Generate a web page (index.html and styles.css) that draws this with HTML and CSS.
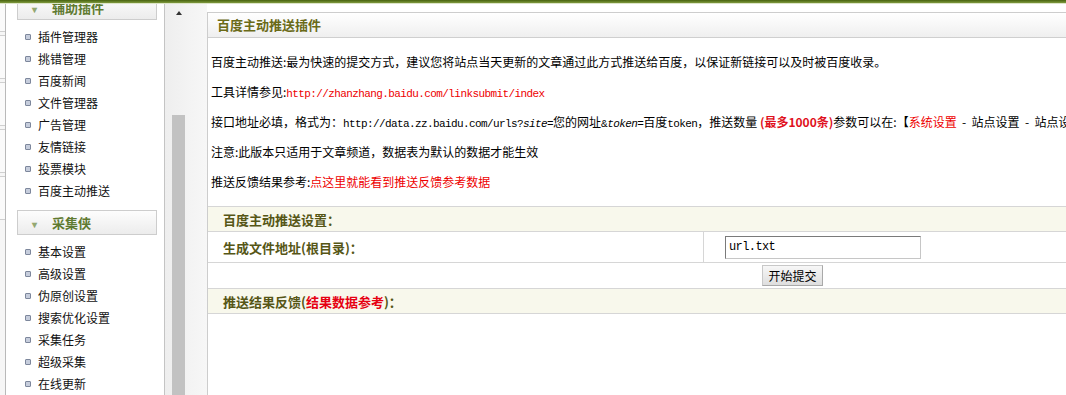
FILE: index.html
```html
<!DOCTYPE html>
<html>
<head>
<meta charset="utf-8">
<title>百度主动推送插件</title>
<link rel="stylesheet" href="styles.css">
</head>
<body>

<div class="topbar"></div>

<div class="layout">
  <div class="strip">
    <div class="strip-box first"></div>
    <div class="strip-box"></div>
    <div class="strip-box"></div>
    <div class="strip-box"></div>
    <div class="strip-box"></div>
  </div>

  <div class="side">
    <div class="menu-head first"><span class="chev">&#9662;</span>辅助插件</div>
    <ul class="menu">
      <li>插件管理器</li>
      <li>挑错管理</li>
      <li>百度新闻</li>
      <li>文件管理器</li>
      <li>广告管理</li>
      <li>友情链接</li>
      <li>投票模块</li>
      <li>百度主动推送</li>
    </ul>
    <div class="menu-head"><span class="chev">&#9662;</span>采集侠</div>
    <ul class="menu">
      <li>基本设置</li>
      <li>高级设置</li>
      <li>伪原创设置</li>
      <li>搜索优化设置</li>
      <li>采集任务</li>
      <li>超级采集</li>
      <li>在线更新</li>
    </ul>
  </div>

  <div class="scroll">
    <span class="arrow"></span>
    <div class="thumb"></div>
  </div>

  <div class="main">
    <div class="box">
      <div class="box-head">百度主动推送插件</div>
      <div class="intro">
        <p>百度主动推送:最为快速的提交方式，建议您将站点当天更新的文章通过此方式推送给百度，以保证新链接可以及时被百度收录。</p>
        <p>工具详情参见:<span class="mono red">http://zhanzhang.baidu.com/linksubmit/index</span></p>
        <p>接口地址必填，格式为：<span class="mono">http://data.zz.baidu.com/urls?<i>site</i>=</span>您的网址<span class="mono">&amp;<i>token</i>=</span>百度<span class="mono">token</span>，推送数量 <b class="red">(最多1000条)</b>参数可以在:【<span class="red">系统设置</span> &nbsp;-&nbsp; 站点设置 &nbsp;-&nbsp; 站点设置 - 百度推送接口】中设置</p>
        <p>注意:此版本只适用于文章频道，数据表为默认的数据才能生效</p>
        <p>推送反馈结果参考:<span class="red">点这里就能看到推送反馈参考数据</span></p>
      </div>

      <table class="form">
        <tr class="title">
          <td colspan="2">百度主动推送设置：</td>
        </tr>
        <tr>
          <td class="label">生成文件地址(根目录)：</td>
          <td class="field"><input type="text" value="url.txt"></td>
        </tr>
        <tr>
          <td colspan="2" class="submit"><button type="button">开始提交</button></td>
        </tr>
        <tr class="title">
          <td colspan="2">推送结果反馈(<span class="red">结果数据参考</span>)：</td>
        </tr>
      </table>
    </div>
  </div>
</div>

</body>
</html>
```

FILE: styles.css
```css
html, body { margin: 0; padding: 0; }
body {
  font: 12px "Noto Sans CJK SC", sans-serif;
  color: #000;
  background: #fff;
  overflow: hidden;
  width: 1066px;
  height: 395px;
}

.topbar {
  height: 3px;
  background: linear-gradient(#47620f, #7f9a3e);
  border-bottom: 1px solid #dde5c8;
}

.layout { display: flex; height: 391px; overflow: hidden; }

/* narrow frame edge on the far left */
.strip {
  width: 5px;
  flex: none;
  border-right: 1px solid #b9b9b9;
  background: #f6f6f6;
  display: flex;
  flex-direction: column;
  gap: 3px;
}
.strip-box { height: 42px; flex: none; border-top: 1px solid #cfcfcf; border-bottom: 1px solid #cfcfcf; background: #fafafa; }
.strip-box.first { margin-top: -16px; }

/* left menu */
.side {
  width: 158px;
  flex: none;
  border-right: 1px solid #c4c4c4;
  background: #fff;
}
.menu-head {
  margin-left: 11px;
  width: 138px;
  height: 23px;
  line-height: 23px;
  border: 1px solid #cdcdcd;
  background: linear-gradient(#fdfdfd, #ececec);
  color: #5f7a30;
  font-weight: bold;
  font-size: 13px;
}
.menu-head.first { margin-top: -9px; }
.chev { display: inline-block; width: 34px; padding-left: 14px; box-sizing: border-box; color: #94a872; font-size: 10px; }
.menu { list-style: none; margin: 0; padding: 6px 0 8px; }
.menu li {
  height: 22px;
  line-height: 22px;
  padding-left: 32px;
  position: relative;
  color: #111;
}
.menu li::before {
  content: "";
  position: absolute;
  left: 19px;
  top: 8px;
  width: 4px;
  height: 4px;
  border: 1px solid #7d879c;
  border-radius: 1px;
  background: #c6cddc;
}

/* frame scrollbar */
.scroll {
  width: 42px;
  flex: none;
  background: linear-gradient(90deg, #eeeeee, #f7f7f7);
  position: relative;
}
.arrow {
  position: absolute;
  left: 11px;
  top: 7px;
  border: 3px solid transparent;
  border-bottom: 4px solid #333;
  border-top: 0;
}
.thumb { margin: 111px 0 0 7px; width: 13px; height: 300px; background: #c2c2c2; }

/* main content */
.main { flex: none; padding-top: 8px; }
.box {
  width: 1169px;
  border: 1px solid #cdcdcd;
  border-bottom: 0;
  min-height: 400px;
  background: #fff;
}
.box-head {
  height: 24px;
  line-height: 24px;
  padding-left: 9px;
  border-bottom: 1px solid #cfcfcf;
  background: linear-gradient(#ffffff, #efefef);
  color: #6a6a18;
  font-weight: bold;
  font-size: 13px;
}
.intro { padding: 9px 3px 9px; }
.intro p { margin: 0; height: 30px; line-height: 30px; white-space: nowrap; }
.red { color: #ee0000; }
b.red { color: #e01020; }
.mono { font-family: "Liberation Mono", monospace; font-size: 11px; letter-spacing: -0.6px; line-height: 1; }

.form { width: 100%; border-collapse: collapse; border-top: 1px solid #d6d6d6; }
.form td { border-bottom: 1px solid #d6d6d6; padding: 0; }
.form .title td {
  height: 24px;
  background: #f8f8ec;
  padding-left: 15px;
  color: #565616;
  font-weight: bold;
  font-size: 13px;
}
.form .title .red { color: #e60012; }
.form .label {
  width: 480px;
  height: 30px;
  padding-left: 15px;
  color: #565616;
  font-weight: bold;
  font-size: 13px;
  border-right: 1px solid #d6d6d6;
}
.form .field { padding-left: 21px; }
.form .field input {
  width: 196px;
  height: 23px;
  box-sizing: border-box;
  border: 1px solid #c6c6c6;
  border-top-color: #7a7a7a;
  border-left-color: #7a7a7a;
  padding: 0 3px;
  font: 12px "Liberation Mono", monospace;
  letter-spacing: -0.6px;
  display: block;
}
.form .submit { height: 25px; text-align: center; }
.form .submit button {
  height: 21px;
  padding: 0 5px;
  font: 12px "Noto Sans CJK SC", sans-serif;
  line-height: 19px;
  border: 1px solid #c8c8c8;
  border-right-color: #a9a9a9;
  border-bottom-color: #a9a9a9;
  background: linear-gradient(#f7f7f7, #dedede);
  color: #000;
  vertical-align: middle;
}
```
